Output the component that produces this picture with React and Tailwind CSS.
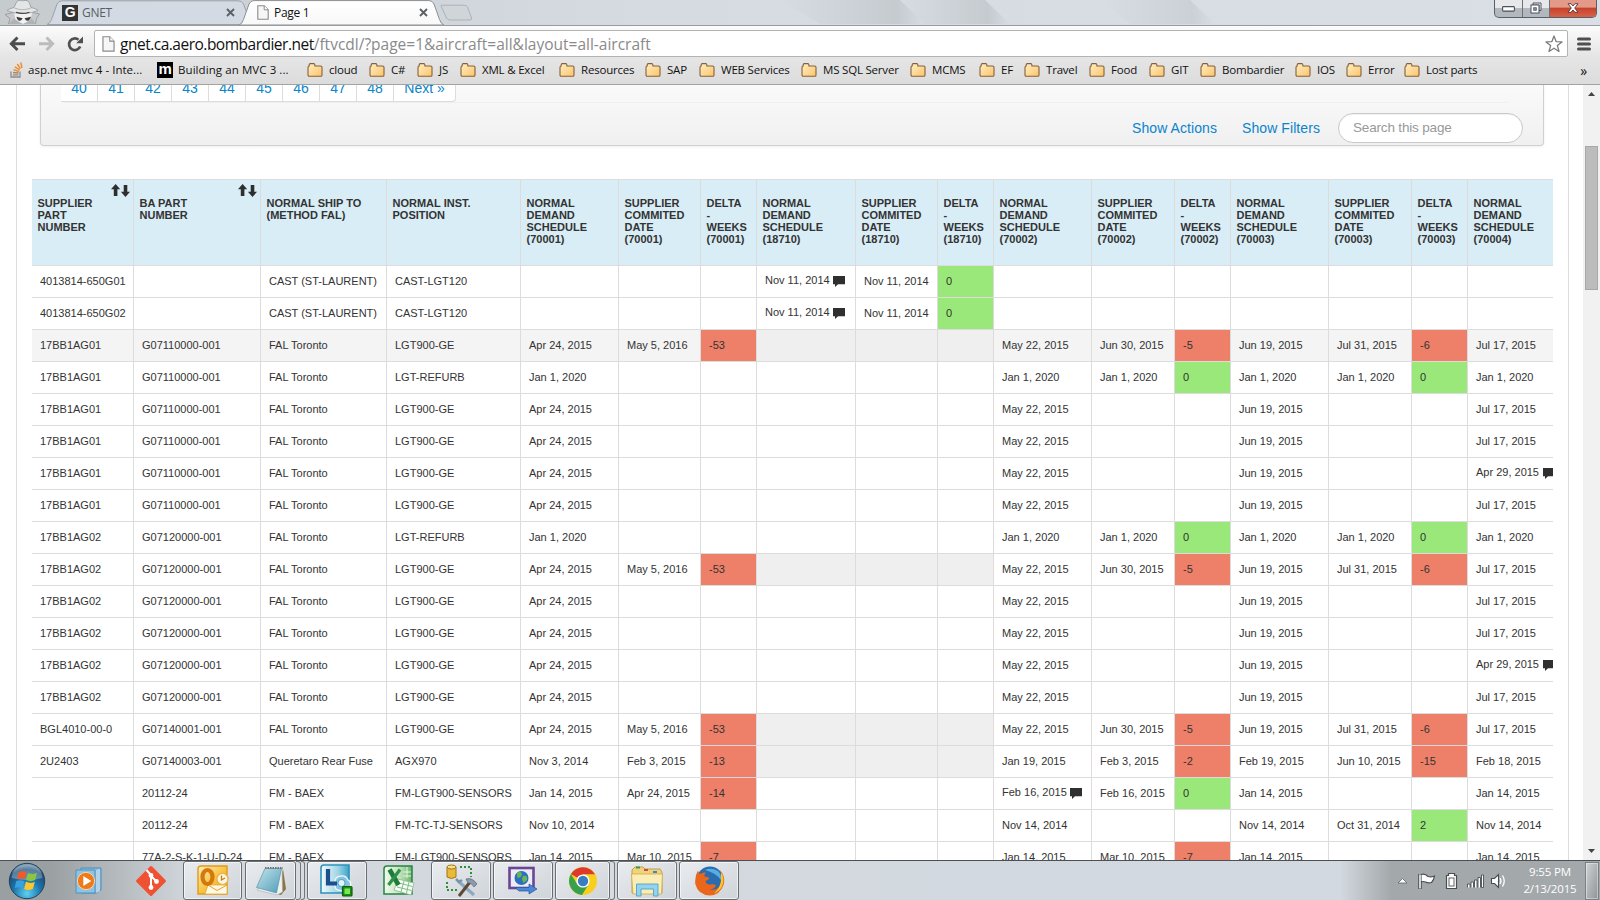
const COLUMNS = [
  ['w-[101px]', 'SUPPLIER PART NUMBER', true],
  ['w-[127px]', 'BA PART NUMBER', true],
  ['w-[126px]', 'NORMAL SHIP TO (METHOD FAL)'],
  ['w-[134px]', 'NORMAL INST. POSITION'],
  ['w-[98px]', 'NORMAL DEMAND SCHEDULE (70001)'],
  ['w-[82px]', 'SUPPLIER COMMITED DATE (70001)'],
  ['w-[56px]', 'DELTA - WEEKS (70001)'],
  ['w-[99px]', 'NORMAL DEMAND SCHEDULE (18710)'],
  ['w-[82px]', 'SUPPLIER COMMITED DATE (18710)'],
  ['w-[56px]', 'DELTA - WEEKS (18710)'],
  ['w-[98px]', 'NORMAL DEMAND SCHEDULE (70002)'],
  ['w-[83px]', 'SUPPLIER COMMITED DATE (70002)'],
  ['w-[56px]', 'DELTA - WEEKS (70002)'],
  ['w-[98px]', 'NORMAL DEMAND SCHEDULE (70003)'],
  ['w-[83px]', 'SUPPLIER COMMITED DATE (70003)'],
  ['w-[56px]', 'DELTA - WEEKS (70003)'],
  ['w-[86px]', 'NORMAL DEMAND SCHEDULE (70004)'],
];

const G1 = 'G07110000-001';
const G2 = 'G07120000-001';
const A = 'Apr 24, 2015';
const M = 'May 22, 2015';
const N = 'Jun 19, 2015';
const L = 'Jul 17, 2015';
const J = 'Jan 1, 2020';
const K = 'Jan 14, 2015';
const T = 'FAL Toronto';
const V = 'LGT900-GE';

// '*' after a date marks a comment; 'r:' / 'g:' colour a delta; '#' is a disabled cell.
const late = [A, 'May 5, 2016', 'r:-53', '#', '#', '#', M, 'Jun 30, 2015', 'r:-5', N, 'Jul 31, 2015', 'r:-6', L];
const refurb = [J, '', '', '', '', '', J, J, 'g:0', J, J, 'g:0', J];
const plain = [A, '', '', '', '', '', M, '', '', N, '', '', L];
const noted = [A, '', '', '', '', '', M, '', '', N, '', '', 'Apr 29, 2015*'];
const cast = ['', '', '', 'Nov 11, 2014*', 'Nov 11, 2014', 'g:0', '', '', '', '', '', '', ''];

const ROWS = [
  ['4013814-650G01', '', 'CAST (ST-LAURENT)', 'CAST-LGT120', ...cast],
  ['4013814-650G02', '', 'CAST (ST-LAURENT)', 'CAST-LGT120', ...cast],
  ['17BB1AG01', G1, T, V, ...late],
  ['17BB1AG01', G1, T, 'LGT-REFURB', ...refurb],
  ['17BB1AG01', G1, T, V, ...plain],
  ['17BB1AG01', G1, T, V, ...plain],
  ['17BB1AG01', G1, T, V, ...noted],
  ['17BB1AG01', G1, T, V, ...plain],
  ['17BB1AG02', G2, T, 'LGT-REFURB', ...refurb],
  ['17BB1AG02', G2, T, V, ...late],
  ['17BB1AG02', G2, T, V, ...plain],
  ['17BB1AG02', G2, T, V, ...plain],
  ['17BB1AG02', G2, T, V, ...noted],
  ['17BB1AG02', G2, T, V, ...plain],
  ['BGL4010-00-0', 'G07140001-001', T, V, ...late],
  ['2U2403', 'G07140003-001', 'Queretaro Rear Fuse', 'AGX970', 'Nov 3, 2014', 'Feb 3, 2015', 'r:-13', '#', '#', '#', 'Jan 19, 2015', 'Feb 3, 2015', 'r:-2', 'Feb 19, 2015', 'Jun 10, 2015', 'r:-15', 'Feb 18, 2015'],
  ['', '20112-24', 'FM - BAEX', 'FM-LGT900-SENSORS', K, A, 'r:-14', '', '', '', 'Feb 16, 2015*', 'Feb 16, 2015', 'g:0', K, '', '', K],
  ['', '20112-24', 'FM - BAEX', 'FM-TC-TJ-SENSORS', 'Nov 10, 2014', '', '', '', '', '', 'Nov 14, 2014', '', '', 'Nov 14, 2014', 'Oct 31, 2014', 'g:2', 'Nov 14, 2014'],
  ['', '77A-2-S-K-1-U-D-24', 'FM - BAEX', 'FM-LGT900-SENSORS', K, 'Mar 10, 2015', 'r:-7', '', '', '', K, 'Mar 10, 2015', 'r:-7', K, '', '', K],
];

const BOOKMARKS = [
  ['w-[29px]', 'cloud'], ['w-[15px]', 'C#'], ['w-[10px]', 'JS'], ['w-[66px]', 'XML & Excel'],
  ['w-[53px]', 'Resources'], ['w-[21px]', 'SAP'], ['w-[69px]', 'WEB Services'], ['w-[76px]', 'MS SQL Server'],
  ['w-[36px]', 'MCMS'], ['w-[12px]', 'EF'], ['w-[32px]', 'Travel'], ['w-[27px]', 'Food'], ['w-[18px]', 'GIT'],
  ['w-[62px]', 'Bombardier'], ['w-[18px]', 'IOS'], ['w-[25px]', 'Error'], ['w-[60px]', 'Lost parts'],
];

const Folder = () => (
  <svg width="16" height="14" viewBox="0 0 16 14" className="shrink-0">
    <defs>
      <linearGradient id="fold" x1="0" y1="0" x2="1" y2="1">
        <stop offset="0" stopColor="#fff0c4" /><stop offset="1" stopColor="#fcc36a" />
      </linearGradient>
    </defs>
    <path d="M2.200 3V2Q2.200 .6 3.200 .6H6.800Q7.700 .6 7.900 2V3H13.500Q15 3 15 4.300V12Q15 13.300 13.800 13.300H2.200Q1 13.300 1 12V4.300Q1 3 2.200 3Z" fill="url(#fold)" stroke="#85603d" strokeWidth="1.100" />
  </svg>
);

const PageIcon = ({ big }) => (
  <svg width={big ? 13 : 12} height={big ? 16 : 15} viewBox="0 0 12 15" className="shrink-0">
    <path d="M.8 .7H7.2L11.2 4.8V14.2H.8Z" fill="#f6f6f6" stroke="#8a8a8a" strokeWidth="1.1" />
    <path d="M7.2 .7V4.8H11.2" fill="#fff" stroke="#8a8a8a" strokeWidth="1" />
  </svg>
);

const Close = () => (
  <svg width="9" height="9" viewBox="0 0 9 9" className="shrink-0">
    <path d="M1 1L8 8M8 1L1 8" stroke="#5e6064" strokeWidth="1.9" />
  </svg>
);

const SortArrows = () => (
  <svg width="19" height="13" viewBox="0 0 19 13">
    <path d="M4.6 0L9.2 5.2H6.4V12H2.8V5.2H0Z M14.5 13L9.9 7.8H12.7V1H16.3V7.8H19Z" fill="#2e2e2e" />
  </svg>
);

const Comment = () => (
  <svg width="12" height="11" viewBox="0 0 12 11" className="ml-[3.5px] mt-[3px] shrink-0">
    <path d="M0 0H12V8.2H5L2 11V8.2H0Z" fill="#2f2f2f" />
  </svg>
);

function Cell({ value, first, hover }) {
  let text = value;
  let bg = hover ? 'bg-[#f4f4f4]' : 'bg-white';
  if (value.startsWith('r:')) { bg = 'bg-[#ee8069]'; text = value.slice(2); }
  if (value.startsWith('g:')) { bg = 'bg-[#9ae87a]'; text = value.slice(2); }
  if (value === '#') { bg = 'bg-[#efefef]'; text = ''; }
  const note = text.endsWith('*');
  if (note) text = text.slice(0, -1);
  return (
    <td className={`h-[32px] overflow-hidden whitespace-nowrap border-t border-[#dcdcdc] p-0 pl-2 align-middle text-[11px] leading-[14px] text-[#333] ${first ? '' : 'border-l'} ${bg}`}>
      <div className={note ? 'flex items-center pb-[3px]' : 'pb-[2px]'}>
        <span>{text}</span>
        {note && <Comment />}
      </div>
    </td>
  );
}

const Incognito = () => (
  <svg width="36" height="24" viewBox="0 0 36 24" className="ml-[5px] shrink-0">
    <path d="M0 14.500L8 12.500V10H28V12.500L34.500 14L31.500 18.500L30.500 24H3.500L5 18.500Z" fill="#c6c8ca" stroke="#939698" strokeWidth=".8" />
    <path d="M8.500 11H27.500L25.500 19.500L18 24L10.500 19.500Z" fill="#f2f2f2" />
    <path d="M2 10.500Q4 8.500 9 7.500L11 3Q12.500 -.6 17.500 .8Q23 -.6 24.500 3L26 7.500Q31 8.300 33 10.500Q27 13.500 17.500 13.500Q8 13.500 2 10.500Z" fill="#e4e5e6" stroke="#96999b" strokeWidth=".8" />
    <path d="M9.500 8Q17.500 11.500 25.800 8" stroke="#b5b8ba" strokeWidth="1.200" fill="none" />
    <path d="M11 12.200Q17.500 14.600 24.500 12.200" stroke="#444" strokeWidth="1.100" fill="none" />
    <path d="M11.500 16.800L17.600 18.200Q16.200 21.300 13.800 20.700Q11.800 20 11.500 16.800ZM26 16.800L19.600 18.200Q20.800 21.300 23.300 20.700Q25.400 20 26 16.800Z" fill="#3b3b3b" />
    <path d="M3.500 24L9 18.500L16 24ZM30.500 24L27 18.500L20 24Z" fill="#b0b3b5" />
  </svg>
);

function TabStrip() {
  return (
    <div className="flex h-[25px] items-start bg-linear-to-r from-[#c6cbce] via-[#d6dbe2] via-40% to-[#d9dfe4]">
      <Incognito />
      <div className="relative ml-[6px] h-[25px] w-[393px]">
        <svg width="440" height="25" viewBox="0 0 440 25" className="absolute left-0 top-0">
          <defs>
            <linearGradient id="act" x1="0" y1="0" x2="0" y2="1"><stop offset="0" stopColor="#fff" /><stop offset="1" stopColor="#f8f8f8" /></linearGradient>
          </defs>
          <path d="M0 24.500Q3 23.500 4.500 19.500L10 4Q11.500 .8 15 .8H191Q195 .8 196.500 4L202 19Q203.500 23.500 207 24.500Z" fill="#d3dae3" stroke="#9da2a7" strokeWidth="1" />
          <path d="M192 25Q195 24 196.500 19.500L202 4Q203.500 .6 207 .6H382Q385.500 .6 387 4L392.500 19.500Q394 24 397 25Z" fill="url(#act)" stroke="#8c9093" strokeWidth="1" />
          <path d="M394 6Q393.500 5.200 395 5.200H417Q419.500 5.200 420.500 7L424.500 18Q425 20 423 20H403Q400.500 20 399.500 18Z" fill="#d0d5da" stroke="#aeb2b6" strokeWidth="1" />
        </svg>
        <div className="relative flex h-[25px] items-center font-['Open_Sans','Noto_Sans',sans-serif] text-[12px] tracking-[-0.3px]">
          <div className="ml-[15px] flex h-4 w-4 items-center justify-center bg-[#333] font-['Liberation_Sans',sans-serif] text-[14px] font-bold text-white">G</div>
          <span className="ml-1 w-[144px] text-[#5b5e62]">GNET</span>
          <Close />
          <span className="ml-[22px] flex"><PageIcon /></span>
          <span className="ml-[5px] w-[145px] text-[#111]">Page 1</span>
          <Close />
        </div>
      </div>
      <svg width="620" height="24" viewBox="0 0 620 24" className="ml-[190px] shrink-0">
        <defs>
          <linearGradient id="streak" x1="0" y1="0" x2="1" y2="0"><stop offset="0" stopColor="#c3c9cc" stopOpacity="0" /><stop offset=".8" stopColor="#c0c6ca" stopOpacity=".8" /><stop offset="1" stopColor="#c0c6ca" stopOpacity="0" /></linearGradient>
        </defs>
        <path d="M150 0H270L295 24H190Z" fill="url(#streak)" /><path d="M270 0H355L380 24H295Z" fill="url(#streak)" /><path d="M470 0H560L585 24H500Z" fill="url(#streak)" opacity=".7" />
      </svg>
      <div className="ml-auto mr-[3px] flex h-[18px] w-[103px] overflow-hidden rounded-b-[5px] border border-t-0 border-[#5b5f66] bg-linear-to-b from-[#e6e8ea] from-45% to-[#b3b8be] to-50%">
        <div className="flex w-[28px] items-center justify-center border-r border-[#6d7178]">
          <svg width="13" height="6" viewBox="0 0 13 6"><rect x=".6" y=".6" width="11.800" height="4.500" rx=".8" fill="#fff" stroke="#4c5060" strokeWidth="1.100" /></svg>
        </div>
        <div className="flex w-[27px] items-center justify-center border-r border-[#6d7178] pb-[2px]">
          <svg width="12" height="12" viewBox="0 0 12 12"><path d="M3 1H11V8.500H9V3H3Z" fill="#fff" stroke="#4c5060" /><rect x="1" y="3" width="8" height="8" fill="#fff" stroke="#4c5060" /><rect x="3.800" y="5.800" width="2.400" height="2.400" fill="#b9bdc4" stroke="#4c5060" /></svg>
        </div>
        <div className="flex flex-1 items-center justify-center bg-linear-to-b from-[#e39a88] from-40% via-[#c9432b] via-50% to-[#d4634a] pb-[2px]">
          <svg width="12" height="10" viewBox="0 0 12 10"><path d="M1 .7H4L6 3L8 .7H11L7.700 5L11 9.300H8L6 7L4 9.300H1L4.300 5Z" fill="#fff" stroke="#57333a" strokeWidth=".9" /></svg>
        </div>
      </div>
    </div>
  );
}

function Toolbar() {
  return (
    <div className="flex h-[60px] flex-col border-b border-t border-b-[#a3a3a3] border-t-[#999c9f] bg-linear-to-b from-[#fcfcfc] via-[#e6e6e6] via-50% to-[#dcdcdc] font-['Open_Sans','Noto_Sans',sans-serif]">
      <div className="flex h-[31px] items-end">
        <svg width="75" height="18" viewBox="0 0 75 18" className="mb-[4px] ml-[9px]">
          <path d="M16 8.700H3M8.500 2.500L2.300 8.700L8.500 15" stroke="#4c4c4c" strokeWidth="2.900" fill="none" />
          <path d="M30 8.700H43M37.500 2.500L43.700 8.700L37.500 15" stroke="#bcbcbc" strokeWidth="2.900" fill="none" />
          <path d="M71.200 11.500A5.800 5.800 0 1 1 69.500 4.700" stroke="#505050" strokeWidth="2.700" fill="none" />
          <path d="M74 1.500V8.300H67.200Z" fill="#505050" />
        </svg>
        <div className="ml-[10px] flex h-[27px] w-[1474px] items-center rounded-[2px] border border-[#b3b3b3] bg-white pl-[7px] pr-[4px]">
          <PageIcon big />
          <span className="ml-[5px] whitespace-nowrap text-[15.5px] leading-[22px] tracking-[0px] text-[#8a8a8a]">
            <span className="tracking-[-0.5px] text-[#111]">gnet.ca.aero.bombardier.net</span>/ftvcdl/?page=1&amp;aircraft=all&amp;layout=all-aircraft
          </span>
          <svg width="18" height="18" viewBox="0 0 18 18" className="ml-auto">
            <path d="M9 1L11.100 6.600L17 6.900L12.400 10.600L14 16.500L9 13.200L4 16.500L5.600 10.600L1 6.900L6.900 6.600Z" fill="#fff" stroke="#7b7b7b" strokeWidth="1.300" strokeLinejoin="round" />
          </svg>
        </div>
        <svg width="14" height="14" viewBox="0 0 14 14" className="mb-[6px] ml-[9px]">
          <path d="M1.500 2H12.500M1.500 7H12.500M1.500 12H12.500" stroke="#4f4f4f" strokeWidth="3" strokeLinecap="round" />
        </svg>
      </div>
      <div className="flex h-[26px] items-center text-[11.5px] tracking-[-0.2px] text-[#111]">
        <svg width="13" height="16" viewBox="0 0 13 16" className="ml-[10px] shrink-0">
          <path d="M1 9.500V15H10V9.500" stroke="#8c8c8c" strokeWidth="1.300" fill="none" />
          <path d="M2.800 12.800H8.500M3 10.500L8.600 11" stroke="#9a8a74" strokeWidth="1.300" />
          <path d="M3.500 7.700L9 9.500M4.800 4.800L9.700 7.800M7.300 2L10.500 6.700M10.800 .5L12 6" stroke="#ee8a2b" strokeWidth="1.400" />
        </svg>
        <span className="ml-[5px] w-[129px] whitespace-nowrap tracking-[0.03px]">asp.net mvc 4 - Inte...</span>
        <div className="flex h-4 w-4 shrink-0 items-center justify-center bg-black pb-[2px] font-['Liberation_Sans',sans-serif] text-[15px] font-bold text-white">m</div>
        <span className="ml-[5px] w-[128px] whitespace-nowrap tracking-[0.08px]">Building an MVC 3 ...</span>
        <div className="ml-px flex items-center gap-[11px]">
          {BOOKMARKS.map(([w, label]) => (
            <div key={label} className="flex items-center gap-[6px]">
              <Folder />
              <span className={`${w} whitespace-nowrap`}>{label}</span>
            </div>
          ))}
        </div>
        <span className="ml-auto mr-[13px] text-[14px]">»</span>
      </div>
    </div>
  );
}

function Page() {
  return (
    <div className="flex h-[775px] overflow-hidden bg-white">
      <div className="ml-[16px] flex w-[1553px] shrink-0 flex-col border-l border-r border-[#dcdcdc]">
        <div className="ml-[23px] flex h-[61px] w-[1504px] shrink-0 flex-col rounded-b-[4px] border border-t-0 border-[#d0d0d0] bg-linear-to-b from-[#fafafa] to-[#f0f0f0] shadow-[0_1px_3px_rgba(0,0,0,0.07)]">
          <div className="ml-[20px] flex h-[18px] w-[1448px] items-end rounded-b-[4px] border-b border-[#efefef]">
            <div className="flex h-[18px] overflow-hidden rounded-br-[4px] border-b border-r border-[#dcdcdc] bg-white text-[14px] leading-[20px] text-[#0a84cb]">
              {['40', '41', '42', '43', '44', '45', '46', '47', '48'].map((n) => (
                <div key={n} className="h-[18px] w-[37px] border-r border-[#dcdcdc] text-center"><div className="-mt-[6px]">{n}</div></div>
              ))}
              <div className="w-[61px] text-center"><div className="-mt-[6px]">Next »</div></div>
            </div>
          </div>
          <div className="mt-[10px] flex items-center justify-end pr-[20px] text-[14px] text-[#0a84cb]">
            <span className="mr-[25px] tracking-[0.08px]">Show Actions</span>
            <span className="mr-[18px] tracking-[0.08px]">Show Filters</span>
            <div className="flex h-[30px] w-[185px] items-center rounded-full border border-[#c9c9c9] bg-white pl-[14px] text-[13.5px] tracking-[-0.17px] text-[#999] shadow-[inset_0_1px_1px_rgba(0,0,0,0.06)]">Search this page</div>
          </div>
        </div>
        <table className="ml-[15px] mt-[33px] w-[1521px] table-fixed border-separate border-spacing-0">
          <thead>
            <tr>
              {COLUMNS.map(([w, label, sortable], i) => (
                <th key={label} className={`${w} ${i ? 'border-l' : ''} relative h-[86px] border-t border-[#dcdcdc] bg-[#d9edf6] p-0 pl-[5.5px] pt-[17px] text-left align-top text-[11px] font-bold leading-[12px] text-[#333]`}>
                  {sortable && <span className="absolute right-[3px] top-[4px]"><SortArrows /></span>}
                  <div className={i < 2 ? 'w-[66px]' : i < 4 ? 'w-[104px]' : 'w-min'}>{label}</div>
                </th>
              ))}
            </tr>
          </thead>
          <tbody>
            {ROWS.map((row, r) => (
              <tr key={r}>
                {row.map((v, c) => <Cell key={c} value={v} first={c === 0} hover={r === 2} />)}
              </tr>
            ))}
          </tbody>
        </table>
      </div>
      <div className="ml-auto flex w-[17px] shrink-0 flex-col items-center bg-[#f1f1f1]">
        <svg width="7" height="4" viewBox="0 0 7 4" className="mt-[7px]"><path d="M0 4L3.500 0L7 4Z" fill="#444" /></svg>
        <div className="mt-[50px] h-[144px] w-[13px] border border-[#a8a8a8] bg-[#bcbcbc]" />
        <svg width="7" height="4" viewBox="0 0 7 4" className="mb-[7px] mt-auto"><path d="M0 0L3.500 4L7 0Z" fill="#444" /></svg>
      </div>
    </div>
  );
}

const TaskButton = ({ children, size, className = '' }) => (
  <div className={`flex h-[39px] shrink-0 items-center justify-center rounded-[3px] border border-[#6a6e73] bg-linear-to-br from-[#e9ecef] to-[#cfd4d9] shadow-[inset_0_0_0_1px_rgba(255,255,255,0.6)] ${size} ${className}`}>{children}</div>
);

const Stack = ({ size }) => <div className={`h-[39px] shrink-0 rounded-r-[3px] border border-l-0 border-[#73777b] bg-[#d8dce0] ${size}`} />;

const StartOrb = () => (
  <svg width="38" height="38" viewBox="0 0 38 38" className="ml-[8px] shrink-0">
    <defs>
      <radialGradient id="orb" cx=".5" cy=".85" r=".85"><stop offset="0" stopColor="#5fd0f2" /><stop offset=".45" stopColor="#1c77ad" /><stop offset=".8" stopColor="#1d4a73" /><stop offset="1" stopColor="#7fa6bf" /></radialGradient>
    </defs>
    <circle cx="19" cy="19" r="17.700" fill="url(#orb)" stroke="#23425c" strokeWidth="1" />
    <path d="M3.500 16Q5 3 19 2.500Q33 3 34.500 16Q19 20 3.500 16Z" fill="#fff" opacity=".28" />
    <path d="M10.500 10.500Q14.500 8 18.500 10.300L16.700 17.500Q13 15.500 8.800 17.300Z" fill="#ee5a2a" />
    <path d="M20 11Q24.500 13.200 29 10.800L27.200 18Q22.500 20.300 18.200 18Z" fill="#8cc63f" />
    <path d="M8.300 19Q12.500 17.200 16.300 19.200L14.500 26.300Q10.500 24.300 6.600 26Z" fill="#3aa0e0" />
    <path d="M17.900 19.800Q22.500 22 26.800 19.700L25 26.700Q20.500 29 16.100 26.900Z" fill="#fdc52f" />
  </svg>
);

const MediaPlayer = () => (
  <svg width="30" height="27" viewBox="0 0 30 27" className="ml-[29px] mr-[-1px] shrink-0">
    <path d="M6 1H26V23L22 26H6Z" fill="#8dbcdc" stroke="#4e8cb8" />
    <path d="M22 3V26M24 2V25" stroke="#d5ebf7" />
    <path d="M1 3H20V26H1Z" fill="#8cc4e6" stroke="#5291bb" />
    <circle cx="11" cy="14" r="8.600" fill="#ee7a1c" stroke="#fbd3a4" strokeWidth="1" />
    <path d="M8.300 9L16.300 14L8.300 19Z" fill="#fff" />
  </svg>
);

const GitIcon = () => (
  <svg width="32" height="32" viewBox="0 0 32 32" className="ml-[31px] shrink-0">
    <rect x="5" y="5" width="22" height="22" rx="1.500" transform="rotate(45 16 16)" fill="#f05133" />
    <path d="M11.500 5L16 10V22M16 11L21 16" stroke="#fff" strokeWidth="2" fill="none" />
    <circle cx="16" cy="10.500" r="2.400" fill="#fff" /><circle cx="16" cy="22.500" r="2.400" fill="#fff" /><circle cx="21.500" cy="16.500" r="2.400" fill="#fff" />
  </svg>
);

const Outlook = () => (
  <svg width="32" height="31" viewBox="0 0 32 31">
    <defs><linearGradient id="olk" x1="0" y1="0" x2="1" y2="1"><stop offset="0" stopColor="#fdf0c4" /><stop offset=".5" stopColor="#f7c548" /><stop offset="1" stopColor="#f0a31a" /></linearGradient></defs>
    <path d="M4 1H30V29H1V4Q1 1 4 1Z" fill="url(#olk)" stroke="#e39b16" strokeWidth="1.400" />
    <path d="M11 20H30V29H8Z" fill="#fff8e2" stroke="#e8ab3a" strokeWidth=".8" /><path d="M11 20L20 25.500L30 20" stroke="#e2a52a" fill="none" />
    <ellipse cx="10.500" cy="12" rx="5" ry="7" fill="none" stroke="#d5780c" strokeWidth="4.200" />
    <circle cx="25.500" cy="14" r="5.600" fill="#fdf7e0" stroke="#eab04a" strokeWidth="1.300" /><path d="M24.500 10.500V15L28 13" stroke="#c77a10" fill="none" strokeWidth="1.300" />
  </svg>
);

const Notepad = () => (
  <svg width="32" height="32" viewBox="0 0 32 32">
    <defs><linearGradient id="pad" x1="0" y1="0" x2="1" y2="1"><stop offset="0" stopColor="#c3e4ec" /><stop offset="1" stopColor="#4f9db7" /></linearGradient></defs>
    <path d="M28 4L31 24L26 30L22 29Z" fill="#8f7442" /><path d="M27 4L27.500 27L22 30L2 25Z" fill="#eef1f1" stroke="#a5adb0" strokeWidth=".6" />
    <path d="M10 3.500H26.500L21.500 28L1.500 22.500Z" fill="url(#pad)" stroke="#5b93a6" strokeWidth=".7" />
    <path d="M10 3H28" stroke="#6d7376" strokeWidth="2" strokeDasharray="1.500 1" />
  </svg>
);

const Lync = () => (
  <svg width="34" height="33" viewBox="0 0 34 33">
    <defs><linearGradient id="lyn" x1="0" y1="0" x2="1" y2="0"><stop offset="0" stopColor="#f4fbfd" /><stop offset=".6" stopColor="#9fd5e6" /><stop offset="1" stopColor="#3fa5c9" /></linearGradient></defs>
    <path d="M4 1H29V29H1V4Q1 1 4 1Z" fill="url(#lyn)" stroke="#2c93bb" strokeWidth="1.600" />
    <path d="M15 20Q14 12.500 21 12Q26 11.500 28 16Q32 18 30 23Q27 28 20 26.500Q14 26 15 20Z" fill="#86c4e0" stroke="#eff9fc" strokeWidth="1.300" />
    <circle cx="21.500" cy="19" r="3.600" fill="#e2f3f9" stroke="#4d9fc6" />
    <path d="M8 5V19.500H17" stroke="#1c4f8c" strokeWidth="4.200" fill="none" />
    <rect x="22.500" y="22.500" width="9.500" height="9.500" rx="1" fill="#1c8e14" stroke="#0e5e0c" strokeWidth="1.200" /><rect x="24.500" y="24.500" width="5.500" height="5.500" fill="#7be854" />
  </svg>
);

const Excel = () => (
  <svg width="32" height="31" viewBox="0 0 32 31" className="ml-[16px] shrink-0">
    <defs><linearGradient id="xls" x1="0" y1="0" x2="1" y2="0"><stop offset="0" stopColor="#f3faf0" /><stop offset=".55" stopColor="#c5e4bd" /><stop offset="1" stopColor="#66b56b" /></linearGradient></defs>
    <path d="M4 1H29V29H1V4Q1 1 4 1Z" fill="url(#xls)" stroke="#258541" strokeWidth="1.500" />
    <path d="M20 7H28M20 11H28M24 2V13" stroke="#e6f4e3" />
    <path d="M15 14L31 18L28 30L11 25Z" fill="#f8fcf7" stroke="#87b78a" strokeWidth=".8" /><path d="M16 18L29.500 21.500M14 22L28.500 25.500M21 16L18 27M26 17L23.500 28" stroke="#7cbf80" />
    <path d="M6.500 4.500L15.500 20" stroke="#1d7c38" strokeWidth="4.600" /><path d="M17 4.500L5.500 20" stroke="#2f9147" strokeWidth="3.200" />
  </svg>
);

const SqlTools = () => (
  <svg width="33" height="33" viewBox="0 0 33 33">
    <path d="M2 3V13Q6.500 16 11 13V3Z" fill="#e9b93a" stroke="#a3741a" /><ellipse cx="6.500" cy="3" rx="4.500" ry="2" fill="#f8df8b" stroke="#a3741a" />
    <path d="M15 3H26V13M2 18V26H12" stroke="#2f8f37" strokeWidth="2" strokeDasharray="2 2" fill="none" />
    <path d="M13 17L29 31" stroke="#8fa9c0" strokeWidth="3.200" /><path d="M25 18L14 32" stroke="#5c4a34" strokeWidth="3" />
    <path d="M21 15Q27 13 32 20L29 23Q27 19 23 19Z" fill="#8b9bad" stroke="#556" strokeWidth=".6" /><path d="M11 15L14 18L17 16" stroke="#7893ad" strokeWidth="2.500" fill="none" />
  </svg>
);

const Remote = () => (
  <svg width="30" height="29" viewBox="0 0 30 29">
    <rect x="1.500" y="2" width="24" height="20" fill="#eceaf3" stroke="#6a4796" strokeWidth="2.600" />
    <circle cx="13.500" cy="12" r="7" fill="#2c6fc0" /><path d="M9 7Q13 4.500 14 8Q13 12 9.500 12ZM15 10Q20 9 19 14L15.500 17Q13 13 15 10Z" fill="#67b84b" />
    <path d="M7 21.500H21V18L29 23L21 28V25H11Z" fill="#4b86d8" stroke="#2457a0" strokeWidth=".7" />
  </svg>
);

const Chrome = () => (
  <svg width="30" height="30" viewBox="0 0 30 30">
    <circle cx="15" cy="15" r="14" fill="#f9cf1f" />
    <path d="M15 15L2.880 8A14 14 0 0 1 27.100 8.300H15Z" fill="#de3a2c" />
    <path d="M2.880 8A14 14 0 0 0 14 29L20.500 18.500L15 15L9.300 18.200Z" fill="#3aa14b" />
    <circle cx="15" cy="15" r="6.600" fill="#fff" /><circle cx="15" cy="15" r="5.200" fill="#3a7cc4" />
  </svg>
);

const Explorer = () => (
  <svg width="34" height="32" viewBox="0 0 34 32">
    <path d="M2 5L5 2H13L15 4H30L32 7V28H2Z" fill="#f0d37a" stroke="#b99136" strokeWidth=".8" />
    <path d="M6 2.500H10" stroke="#3b9a4a" strokeWidth="2" /><path d="M14 5H18" stroke="#d34a35" strokeWidth="2" /><path d="M23 7H27" stroke="#3a87cf" strokeWidth="2" />
    <path d="M1.500 9H32.500L31.500 29H3Z" fill="#fbeeb4" stroke="#cda94c" strokeWidth=".8" />
    <path d="M6.500 31V19H28V31H23.500V24H11V31Z" fill="#94d3ee" stroke="#4ba3cc" strokeWidth=".9" />
  </svg>
);

const Firefox = () => (
  <svg width="31" height="32" viewBox="0 0 31 32">
    <circle cx="16" cy="15" r="13.500" fill="#2b6cb0" /><path d="M11 5Q17 2 24 6Q28 10 27 15Q22 8 11 5Z" fill="#55aee0" />
    <path d="M26 5Q32 12 29.500 20Q26 30 16 30.500Q4 30 1.300 19Q.5 11 4 5.500Q4.500 8 6 9Q8.500 7 12 7.500Q10 9.500 10.500 11.500L15 12.500Q15.500 14.500 11.500 16Q12 20 17 19.500Q20 18.500 22 20.500Q20 24.500 15.500 24.500Q22 26 25.500 21Q29 14 26 5Z" fill="#e9661b" />
    <path d="M27 7Q31 13 28.500 20Q26.500 26 20 28.500Q27 22 27 15Z" fill="#fbc52c" />
  </svg>
);

function Taskbar() {
  return (
    <div className="flex h-[40px] items-center border-t border-[#4d5052] bg-linear-to-r from-[#9a9fa1] from-3% via-[#d3d8de] via-12% to-[#d3d9e1]">
      <StartOrb />
      <MediaPlayer />
      <GitIcon />
      <TaskButton size="w-[59px]" className="ml-[16px]"><Outlook /></TaskButton>
      <TaskButton size="w-[51px]" className="ml-[3px]"><Notepad /></TaskButton>
      <Stack size="w-[5px]" /><Stack size="w-[4px]" />
      <TaskButton size="w-[60px]" className="ml-[2px]"><Lync /></TaskButton>
      <Excel />
      <TaskButton size="w-[60px]" className="ml-[16px]"><SqlTools /></TaskButton>
      <TaskButton size="w-[60px]" className="ml-[2px]"><Remote /></TaskButton>
      <TaskButton size="w-[55px]" className="ml-[2px]"><Chrome /></TaskButton>
      <Stack size="w-[5px]" />
      <TaskButton size="w-[60px]" className="ml-[2px]"><Explorer /></TaskButton>
      <TaskButton size="w-[60px]" className="ml-[2px]"><Firefox /></TaskButton>
      <div className="ml-auto flex h-[39px] w-[260px] shrink-0 items-center bg-linear-to-r from-[#a4a9ab00] to-[#a3a8aa] to-20%">
        <svg width="110" height="20" viewBox="0 0 110 20" className="ml-[57px] shrink-0">
          <path d="M1 12L5.500 7.500L10 12Z" fill="#fff" stroke="#5e6265" strokeWidth=".8" />
          <path d="M23 3V18" stroke="#494d50" strokeWidth="3.500" /><path d="M24 3.500Q28 2 31 5.500Q34 6.500 37.500 5Q37 9 34.500 11.500Q31 12.500 28.500 11Q26 10 24 11Z" fill="#fff" stroke="#494d50" strokeWidth="1.200" /><path d="M23 3.500V17.500" stroke="#fff" strokeWidth="1.500" />
          <path d="M51.500 2.500H57.500V4.500H59.500V17.500H49.500V4.500H51.500Z" fill="#fff" stroke="#494d50" strokeWidth="1.200" /><rect x="52" y="7" width="5" height="8" fill="#fff" stroke="#5f6366" />
          <path d="M70.500 16.500V13H73V16.500M74 16.500V11H76.500V16.500M77.500 16.500V9H80V16.500M81 16.500V6.500H83.500V16.500M84.500 16.500V4H86.500V16.500Z" fill="#fff" stroke="#494d50" strokeWidth=".9" />
          <path d="M94.500 7.500H97.500L101.500 3.500V16.500L97.500 12.500H94.500Z" fill="#fff" stroke="#494d50" strokeWidth="1.100" /><path d="M103 7Q105 10 103 13M105.500 4.500Q109 10 105.500 15.500" stroke="#fff" strokeWidth="1.300" fill="none" />
        </svg>
        <div className="ml-[11px] w-[64px] whitespace-nowrap pb-px text-center font-['Open_Sans','Noto_Sans',sans-serif] text-[11.5px] leading-[17px] tracking-[-0.15px] text-white">
          <div>9:55 PM</div>
          <div>2/13/2015</div>
        </div>
        <div className="ml-auto mr-[1px] h-[38px] w-[14px] border border-[#7b8083] bg-linear-to-br from-[#cfd3d5] to-[#8f9497] shadow-[inset_0_0_0_1px_rgba(255,255,255,0.4)]" />
      </div>
    </div>
  );
}

export default function App() {
  return (
    <div className="flex h-[900px] w-[1600px] flex-col overflow-hidden bg-white font-['Liberation_Sans',Arial,sans-serif]">
      <TabStrip />
      <Toolbar />
      <Page />
      <Taskbar />
    </div>
  );
}
